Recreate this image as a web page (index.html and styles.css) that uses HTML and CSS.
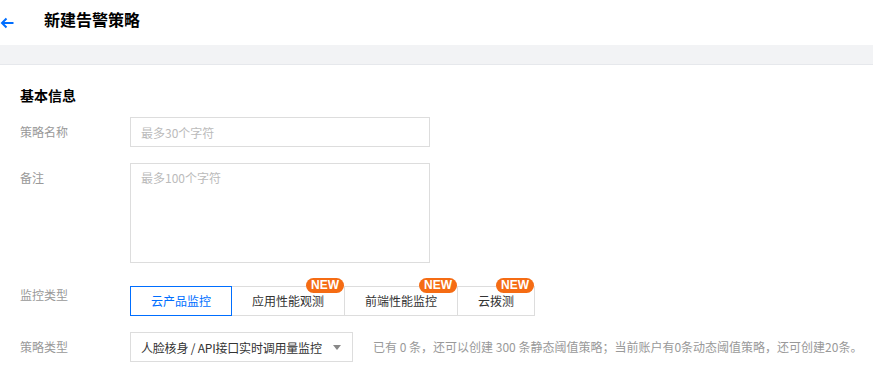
FILE: index.html
```html
<!DOCTYPE html>
<html lang="zh-CN">
<head>
    <meta charset="UTF-8">
    <title>新建告警策略</title>
    <link rel="stylesheet" href="styles.css">
</head>
<body>
    <div class="header">
        <span class="back">
            <svg width="14" height="12" viewBox="0 0 14 12"><path d="M13.5 6H2M6.5 1.5L2 6l4.5 4.5" fill="none" stroke="#006eff" stroke-width="2"/></svg>
        </span>
        <span class="title">新建告警策略</span>
    </div>
    <div class="band"></div>
    <div class="content">
        <h3 class="section-title">基本信息</h3>
        <div class="form-row">
            <div class="label">策略名称</div>
            <input class="text-input" type="text" placeholder="最多30个字符">
        </div>
        <div class="form-row">
            <div class="label">备注</div>
            <textarea class="text-area" placeholder="最多100个字符"></textarea>
        </div>
        <div class="form-row tabs-row">
            <div class="label label-up">监控类型</div>
            <div class="tabs">
                <div class="tab active">云产品监控</div>
                <div class="tab">应用性能观测<span class="badge">NEW</span></div>
                <div class="tab">前端性能监控<span class="badge">NEW</span></div>
                <div class="tab">云拨测<span class="badge">NEW</span></div>
            </div>
        </div>
        <div class="form-row">
            <div class="label">策略类型</div>
            <div class="select">
                <span class="select-text">人脸核身 / API接口实时调用量监控</span>
                <span class="caret"></span>
            </div>
            <div class="hint">已有 0 条，还可以创建 300 条静态阈值策略；当前账户有0条动态阈值策略，还可创建20条。</div>
        </div>
    </div>
</body>
</html>
```

FILE: styles.css
```css
body {
    margin: 0;
    font-family: "Noto Sans CJK SC", "Liberation Sans", sans-serif;
    font-size: 12px;
    color: #333;
    background: #fff;
}
.header {
    height: 45px;
    display: flex;
    align-items: center;
    background: #fff;
}
.back {
    width: 44px;
    display: flex;
    align-items: center;
    padding-top: 1px;
}
.title {
    font-size: 16px;
    font-weight: bold;
    color: #000;
    margin-top: -8px;
}
.band {
    height: 19px;
    background: #f2f3f5;
    border-bottom: 1px solid #e6e8ec;
}
.content {
    padding: 17px 20px 0 20px;
}
.section-title {
    margin: 0 0 9px 0;
    font-size: 14px;
    font-weight: bold;
    color: #000;
    line-height: 26px;
}
.form-row {
    display: flex;
    align-items: flex-start;
    margin-bottom: 16px;
}
.tabs-row {
    margin-top: 23px;
}
.label {
    width: 110px;
    flex-shrink: 0;
    color: #999;
    line-height: 30px;
}
.label-up {
    line-height: 18px;
}
.text-input, .text-area {
    width: 300px;
    box-sizing: border-box;
    border: 1px solid #ddd;
    padding: 0 10px;
    font-family: inherit;
    font-size: 12px;
    color: #333;
    outline: none;
}
.text-input {
    height: 30px;
}
.text-area {
    height: 100px;
    padding-top: 5px;
    resize: none;
}
.text-input::placeholder, .text-area::placeholder {
    color: #bbb;
}
.tabs {
    display: flex;
}
.tab {
    position: relative;
    height: 30px;
    box-sizing: border-box;
    line-height: 28px;
    padding: 0 20px;
    border: 1px solid #ddd;
    margin-left: -1px;
    color: #333;
}
.tab:first-child {
    margin-left: 0;
}
.tab.active {
    border-color: #006eff;
    color: #006eff;
    z-index: 1;
}
.badge {
    position: absolute;
    top: -9px;
    right: 0;
    height: 15px;
    line-height: 15px;
    padding: 0 5px;
    border-radius: 8px;
    background: #f56c14;
    color: #fff;
    font-family: "Liberation Sans", sans-serif;
    font-size: 12px;
    font-weight: bold;
}
.select {
    width: 223px;
    flex-shrink: 0;
    height: 30px;
    box-sizing: border-box;
    border: 1px solid #ddd;
    display: flex;
    align-items: center;
    justify-content: space-between;
    padding: 0 11px 0 10px;
    color: #333;
}
.select-text {
    letter-spacing: -0.2px;
    white-space: nowrap;
}
.caret {
    width: 0;
    height: 0;
    border-left: 4px solid transparent;
    border-right: 4px solid transparent;
    border-top: 5px solid #888;
}
.hint {
    margin-left: 20px;
    line-height: 30px;
    color: #999;
    white-space: nowrap;
}
```
